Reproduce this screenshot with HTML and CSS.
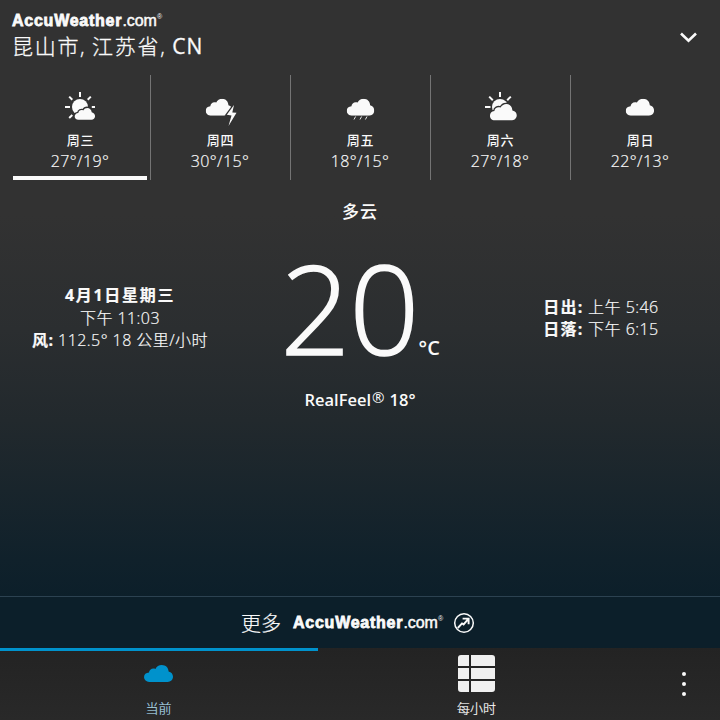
FILE: index.html
```html
<!DOCTYPE html>
<html lang="zh-CN">
<head>
<meta charset="utf-8">
<title>AccuWeather</title>
<link rel="stylesheet" href="styles.css">
</head>
<body>
<svg class="defs" aria-hidden="true">
  <symbol id="cloud" viewBox="0 0 28.4 17" preserveAspectRatio="none">
    <path d="M5 17A5 5 0 0 1 0 12.2C0 9.5 2 7.8 4.9 7.6C5 4.8 8 2.7 11.2 3.9C12.3 1.6 14.6 0 17.4 0C21.3 0 24 2.8 24.1 6.6C26.7 7.2 28.4 9.2 28.4 11.8C28.4 14.8 26 17 23.2 17Z"/>
  </symbol>
</svg>
<main class="app">
  <header class="header">
    <div>
      <div class="logo"><b>AccuWeather</b><span>.com</span><sup>®</sup></div>
      <div class="place">昆山市<i>,</i>江苏省<i>,</i><em>CN</em></div>
    </div>
    <svg class="chevron" viewBox="0 0 20 14"><path d="M2 3.5L9.5 10.8L17 3.5"/></svg>
  </header>

  <section class="forecast">
    <div class="day active">
      <svg viewBox="0 0 40 40"><circle cx="20" cy="19" r="8"/><path class="ray" d="M20 4V9M5 19H10M31.8 19H35M9.2 8.6L12.3 11.8M30.8 8.6L27.7 11.8M9.2 30L12.3 27"/><path class="edge" d="M18.5 31.8C13.5 31.8 13.5 25.2 18.3 25C18.5 22.8 21 21.4 23.2 22.4C25.5 18.3 31.5 19.5 31.7 24.3C36.7 25.5 35.7 31.8 31.5 31.8Z"/></svg>
      <b>周三</b><span>27°/19°</span>
    </div>
    <div class="day">
      <svg viewBox="0 0 40 40"><use href="#cloud" x="5.7" y="10.7" width="26.8" height="17"/><path class="edge" d="M34 17L26.8 26.7L31.5 27.5L28.5 38L36.5 24.7L32.3 24.5Z"/></svg>
      <b>周四</b><span>30°/15°</span>
    </div>
    <div class="day">
      <svg viewBox="0 0 40 40"><use href="#cloud" x="6.7" y="10.7" width="27.6" height="17"/><path class="rain" d="M15.6 28.5L14 31.5M21.6 28.5L20 31.5M27 28.5L25.4 31.5"/></svg>
      <b>周五</b><span>18°/15°</span>
    </div>
    <div class="day">
      <svg viewBox="0 0 40 40"><circle cx="20" cy="19" r="8"/><path class="ray" d="M20 4V9M5 19H10.5M9.2 8.6L12.8 12.2M30.8 8.6L27.2 12.2"/><path class="edge" d="M14.7 32.2C8.6 32.2 8.3 23.5 14.4 23.1C14.5 20 17.7 18.4 20.6 19.6C23.5 14 32 15 32.4 22.4C38.7 23.5 37.7 32.2 32.2 32.2Z"/></svg>
      <b>周六</b><span>27°/18°</span>
    </div>
    <div class="day">
      <svg viewBox="0 0 40 40"><use href="#cloud" x="5.7" y="10.7" width="28.4" height="17"/></svg>
      <b>周日</b><span>22°/13°</span>
    </div>
  </section>

  <h1 class="condition">多云</h1>

  <section class="now">
    <div class="details date">
      <div class="today">4月1日星期三</div>
      <div class="clock">下午 11:03</div>
      <div class="wind"><b>风:</b> 112.5° 18 公里/小时</div>
    </div>
    <div class="temp"><span class="value">20</span><span class="unit">°C</span></div>
    <div class="details sun">
      <div><b>日出:</b> 上午 5:46</div>
      <div><b>日落:</b> 下午 6:15</div>
    </div>
  </section>

  <div class="realfeel"><span>RealFeel</span><sup>®</sup><span>18°</span></div>

  <a class="more">
    <span class="label">更多</span>
    <div class="logo"><b>AccuWeather</b><span>.com</span><sup>®</sup></div>
    <svg viewBox="0 0 22 22"><circle cx="11" cy="11" r="9.3"/><path class="arrow" d="M4.8 16L9 11.4L10.6 12.4L15.4 6.8M9.6 6.6H15.6V12.2"/></svg>
  </a>

  <nav class="tabs">
    <div class="tab current">
      <svg viewBox="0 0 40 40"><use href="#cloud" x="5" y="12" width="29" height="17"/></svg>
      <span>当前</span>
    </div>
    <div class="tab">
      <svg viewBox="0 0 40 40"><path d="M4 2H12V13H1V5Q1 2 4 2ZM14 2H35Q38 2 38 5V13H14ZM1 15H12V26H1ZM14 15H38V26H14ZM1 28H12V39H4Q1 39 1 36ZM14 28H38V36Q38 39 35 39H14Z"/></svg>
      <span>每小时</span>
    </div>
    <div class="menu"><i></i><i></i><i></i></div>
  </nav>
</main>
</body>
</html>
```
FILE: styles.css
```css
* { box-sizing: border-box; }
body {
  margin: 0;
  font-family: "Open Sans", "Noto Sans CJK SC", sans-serif;
  color: #fafafa;
}
.defs { position: absolute; width: 0; height: 0; }
.app {
  width: 720px;
  height: 720px;
  overflow: hidden;
  display: flex;
  flex-direction: column;
  background: linear-gradient(#323232 0, #323232 215px, #2b2e30 330px, #22292d 420px, #10212b 560px, #0c1f2a 600px);
}
svg { display: block; fill: #fafafa; }

.header {
  height: 75px;
  padding: 12px 21px 0 12px;
  display: flex;
  justify-content: space-between;
}
.logo {
  font: 16px/18px "Liberation Sans", sans-serif;
  display: flex;
  white-space: nowrap;
}
.logo b { width: 110.5px; letter-spacing: 0.75px; -webkit-text-stroke: 0.8px #fafafa; }
.logo span { width: 34.5px; letter-spacing: -0.15px; -webkit-text-stroke: 0.5px #fafafa; }
.logo sup { font-size: 7px; line-height: 10px; vertical-align: baseline; }
.place {
  display: flex;
  font-size: 21px;
  font-weight: 300;
  line-height: 28px;
  margin-top: 2px;
  letter-spacing: 1.7px;
  -webkit-text-stroke: 0.3px #fafafa;
}
.place i { width: 12px; font-style: normal; }
.place em { font-style: normal; font-weight: 400; letter-spacing: 1px; }
.chevron { width: 20px; height: 14px; margin-top: 18px; fill: none; stroke: #fafafa; stroke-width: 2.6; }

.forecast {
  height: 105px;
  padding: 0 10px;
  display: grid;
  grid-template-columns: repeat(5, 140px);
}
.day {
  display: flex;
  flex-direction: column;
  align-items: center;
  padding: 13px 1px 0 0;
  border-left: 1px solid #747474;
  position: relative;
}
.day:first-child { border-left-color: transparent; }
.day.active::after {
  content: "";
  position: absolute;
  left: 2px;
  right: 3px;
  bottom: 0;
  height: 4px;
  background: #fafafa;
}
.day svg { width: 40px; height: 40px; }
.day b { font-size: 13px; font-weight: 500; line-height: 20px; margin: 2px 0 0 1px; letter-spacing: 0.7px; }
.day span { font-size: 16px; font-weight: 300; line-height: 20px; margin-top: 1px; letter-spacing: 0.4px; -webkit-text-stroke: 0.2px #fafafa; }
.ray { fill: none; stroke: #fafafa; stroke-width: 2; }
.edge { stroke: #323232; stroke-width: 2.6; paint-order: stroke; }
.rain { fill: none; stroke: #fafafa; stroke-width: 0.9; }

.condition { margin: 21px 0 0; text-align: center; font-size: 17px; line-height: 22px; font-weight: 500; letter-spacing: 1px; }

.now {
  height: 147px;
  padding-top: 27px;
  display: grid;
  grid-template-columns: 240px 240px 240px;
}
.details {
  font-size: 16px;
  font-weight: 300;
  line-height: 22px;
  text-align: center;
  white-space: nowrap;
  letter-spacing: 0.45px;
  -webkit-text-stroke: 0.2px #fafafa;
}
.details b { font-weight: 700; }
.date { padding-top: 34px; line-height: 22.5px; }
.today { font-weight: 700; letter-spacing: 1.7px; }
.sun { padding: 46px 0 0 2px; }
.sun b { letter-spacing: 1.2px; }
.temp { display: flex; justify-content: center; }
.value { font-size: 123px; line-height: 126px; font-weight: 300; letter-spacing: -1px; height: 120px; margin-top: -5px; -webkit-text-stroke: 1.6px #fafafa; }
.unit { font-size: 20px; font-weight: 600; line-height: 24px; margin-top: 86px; }

.realfeel {
  height: 24px;
  margin-top: 18px;
  display: flex;
  justify-content: center;
  font-size: 16.5px;
  font-weight: 600;
  line-height: 24px;
}
.realfeel sup { font-size: 15px; font-weight: 400; line-height: 18px; vertical-align: baseline; margin: 0 5px 0 1px; }

.more {
  margin-top: auto;
  height: 52px;
  border-top: 1px solid #2c4251;
  background: #0c1f2a;
  display: flex;
  align-items: center;
  padding-left: 241px;
}
.label { font-size: 20px; font-weight: 300; width: 52px; -webkit-text-stroke: 0.2px #fafafa; }
.more .logo { padding-top: 1px; }
.more svg { width: 22px; height: 22px; margin-left: 10px; fill: none; stroke: #fafafa; stroke-width: 1.5; }
.more .arrow { stroke-width: 1.9; }

.tabs {
  height: 72px;
  display: grid;
  grid-template-columns: 318px 318px 84px;
  background: linear-gradient(#232323, #292929);
  flex: none;
}
.tab { display: flex; flex-direction: column; align-items: center; padding: 5px 1px 0 0; border-top: 0 solid #0092cc; }
.tab svg { width: 40px; height: 40px; margin-left: 1px; fill: #f0f0f0; }
.tab span { font-size: 13px; font-weight: 300; line-height: 20px; margin-top: 5px; -webkit-text-stroke: 0.2px; }
.current { border-top-width: 3px; padding-top: 2px; }
.current svg { fill: #0092cc; }
.current span { color: #a9d6e6; }
.menu { display: flex; flex-direction: column; align-items: center; gap: 6px; padding: 24px 0 0 11px; }
.menu i { width: 4px; height: 4px; border-radius: 50%; background: #fafafa; }
```
